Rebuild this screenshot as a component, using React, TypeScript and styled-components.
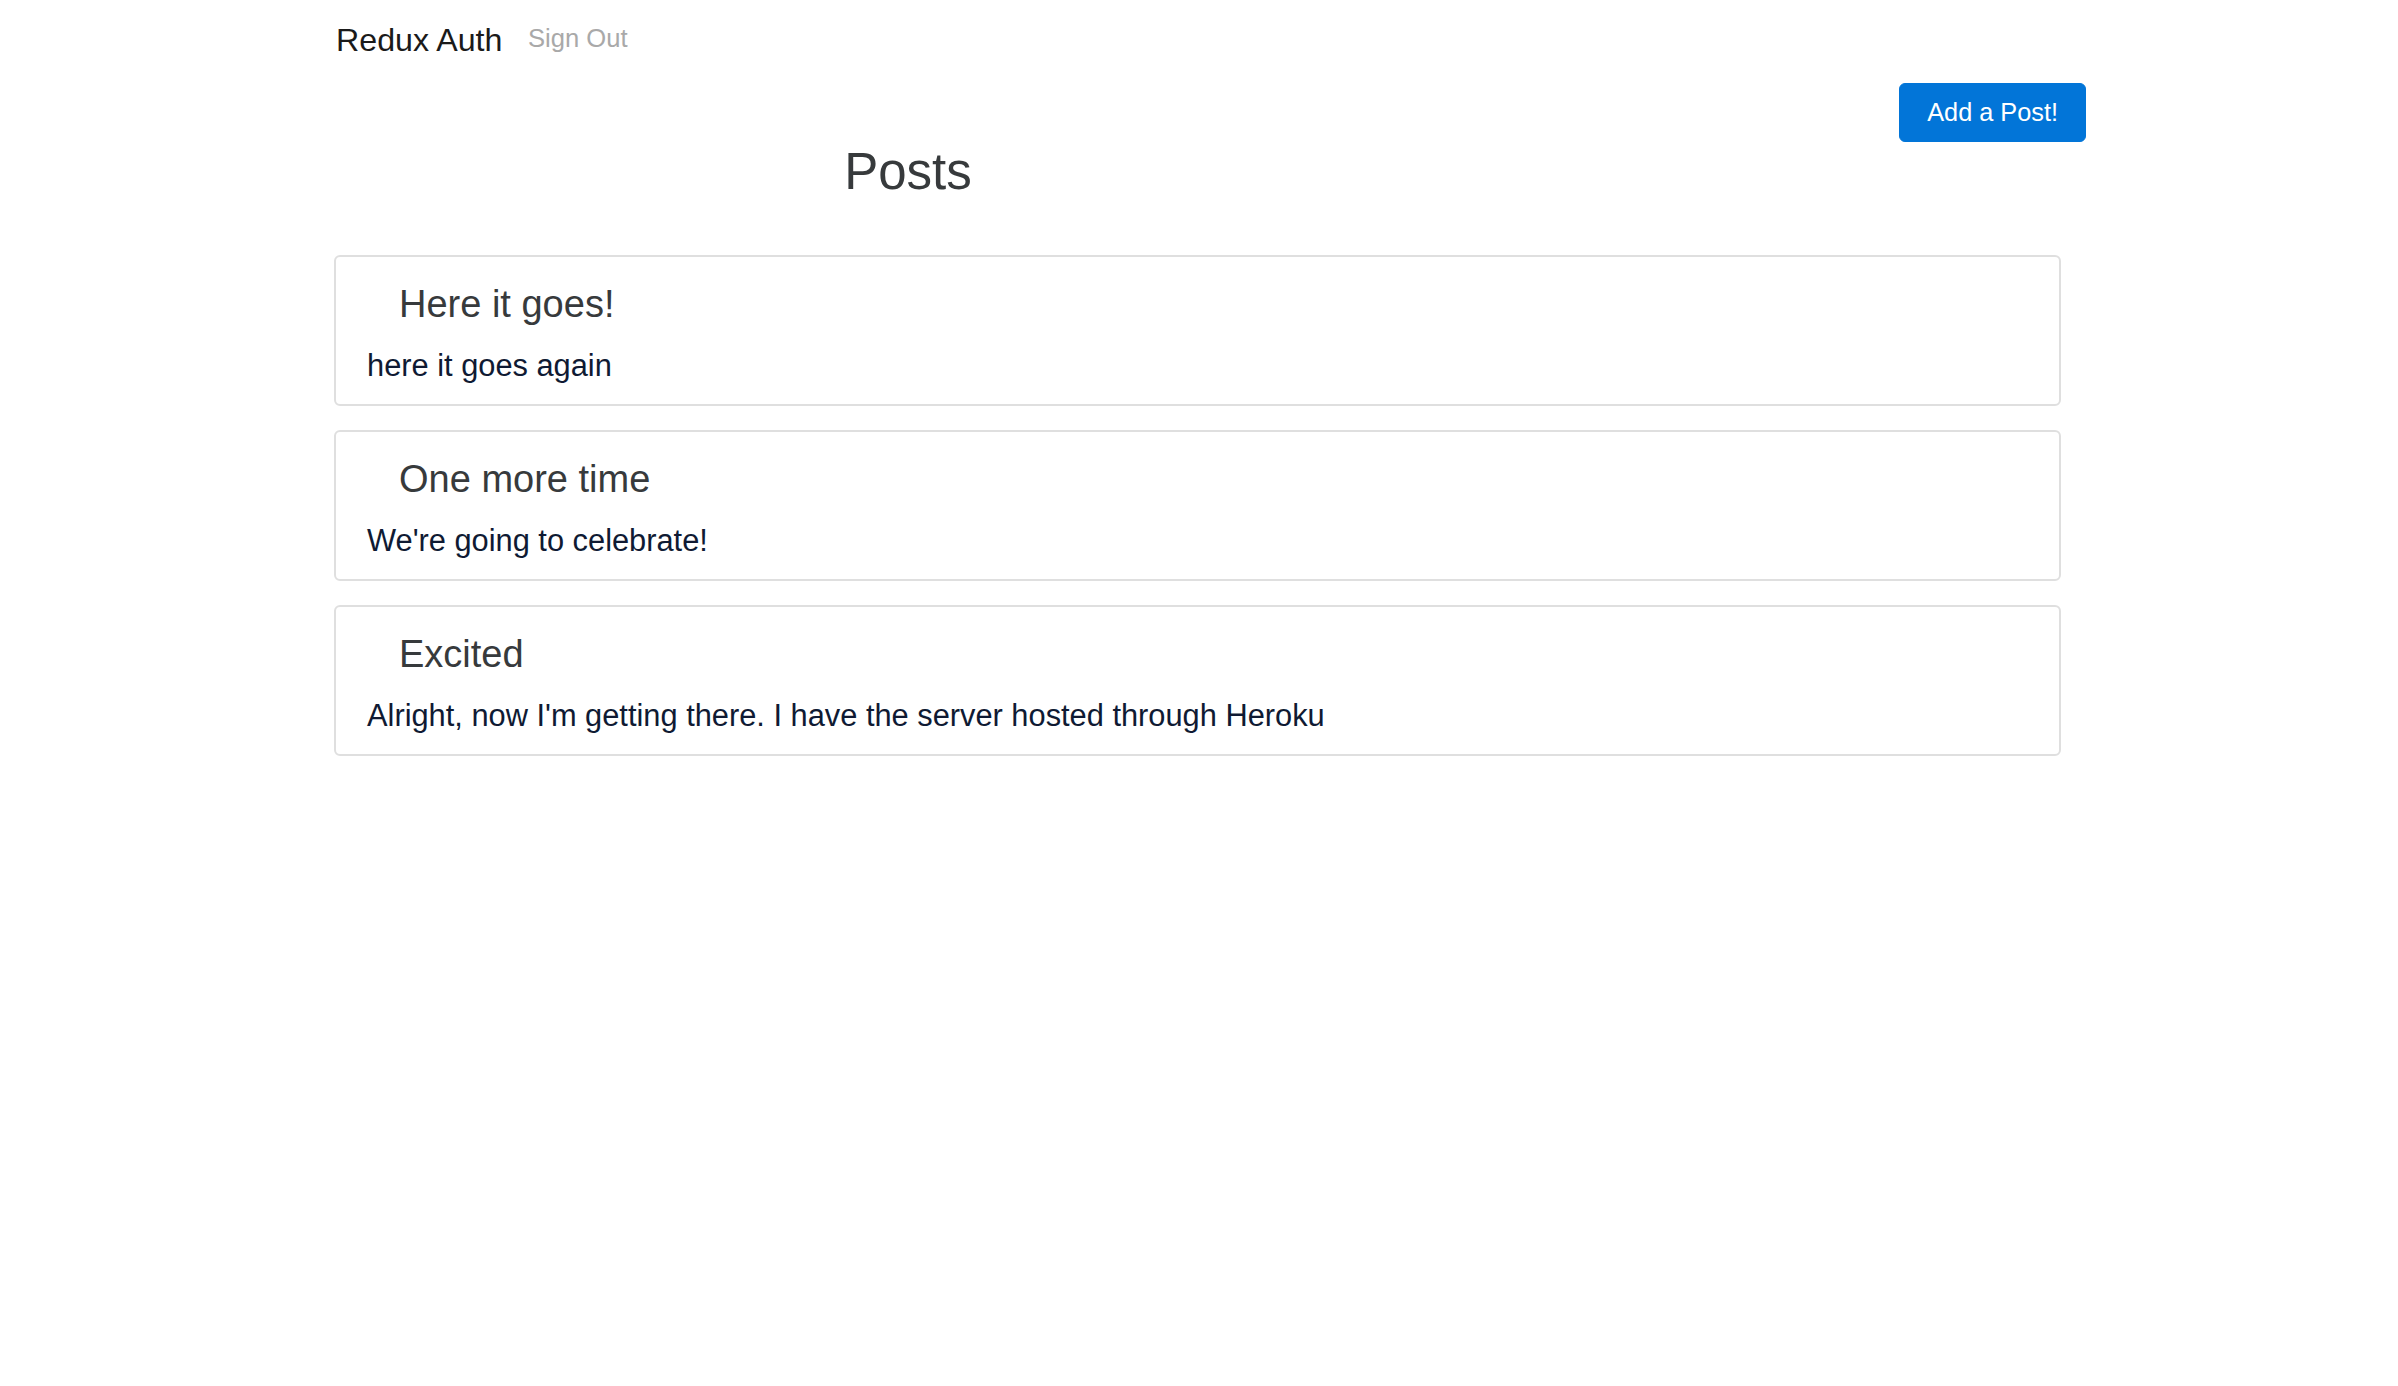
import React from "react";
import styled, { createGlobalStyle } from "styled-components";

const GlobalStyle = createGlobalStyle`
  html, body {
    margin: 0;
    padding: 0;
    background: #ffffff;
  }
  body {
    font-family: "Liberation Sans", Arial, Helvetica, sans-serif;
    color: #373a3c;
  }
  * { box-sizing: border-box; }
`;

const Container = styled.div`
  width: 1727px;
  margin-left: 334px;
  display: flex;
  flex-direction: column;
`;

const Navbar = styled.nav`
  display: flex;
  align-items: flex-start;
  padding-top: 16px;
  padding-left: 2px;
  height: 64px;
`;

const Brand = styled.a`
  font-size: 32.2px;
  line-height: 48px;
  color: #1a1a1a;
  text-decoration: none;
  cursor: pointer;
`;

const NavLink = styled.a`
  margin-top: 4px;
  margin-left: 25.5px;
  font-size: 25.6px;
  line-height: 37px;
  color: #a9a9a9;
  text-decoration: none;
  cursor: pointer;
`;

const ActionRow = styled.div`
  display: flex;
  justify-content: flex-end;
  margin-top: 19px;
  margin-right: -25px;
`;

const PrimaryButton = styled.button`
  display: inline-flex;
  align-items: center;
  justify-content: center;
  height: 59px;
  padding: 0 27px;
  background: #0275d8;
  border: 1px solid #0275d8;
  border-radius: 6px;
  color: #ffffff;
  font-family: "Liberation Sans", Arial, sans-serif;
  font-size: 25.3px;
  cursor: pointer;
`;

const PageTitle = styled.h2`
  width: 1148px;
  margin: 2px 0 0 0;
  text-align: center;
  font-size: 51px;
  line-height: 56px;
  font-weight: 400;
  color: #373a3c;
`;

const PostList = styled.div`
  display: flex;
  flex-direction: column;
  gap: 24px;
  margin-top: 55px;
`;

const Card = styled.div`
  border: 2px solid #dfdfdf;
  border-radius: 6px;
  padding: 26px 31px 16px;
  background: #ffffff;
`;

const CardTitle = styled.h4`
  margin: 0 0 18px 32px;
  font-size: 38px;
  line-height: 42px;
  font-weight: 400;
  color: #373a3c;
`;

const CardText = styled.p`
  margin: 0;
  font-size: 30.8px;
  line-height: 45px;
  color: #0f1a33;
`;

const posts = [
  { id: 1, title: "Here it goes!", content: "here it goes again" },
  { id: 2, title: "One more time", content: "We're going to celebrate!" },
  {
    id: 3,
    title: "Excited",
    content: "Alright, now I'm getting there. I have the server hosted through Heroku",
  },
];

export default function App() {
  return (
    <>
      <GlobalStyle />
      <Container>
        <Navbar>
          <Brand>Redux Auth</Brand>
          <NavLink>Sign Out</NavLink>
        </Navbar>
        <ActionRow>
          <PrimaryButton>Add a Post!</PrimaryButton>
        </ActionRow>
        <PageTitle>Posts</PageTitle>
        <PostList>
          {posts.map((p) => (
            <Card key={p.id}>
              <CardTitle>{p.title}</CardTitle>
              <CardText>{p.content}</CardText>
            </Card>
          ))}
        </PostList>
      </Container>
    </>
  );
}
